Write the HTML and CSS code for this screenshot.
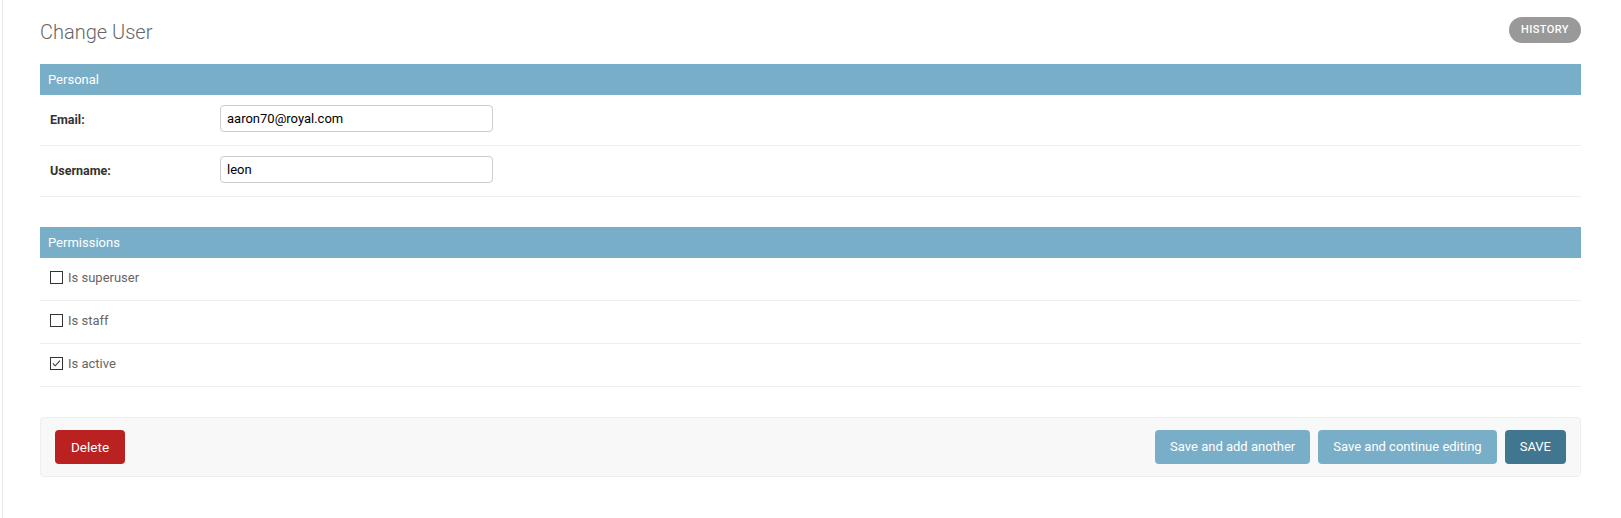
FILE: index.html
```html
<!DOCTYPE html>
<html>
<head>
<meta charset="utf-8">
<title>Change User</title>
<link rel="stylesheet" href="styles.css">
</head>
<body>
<div class="page">
  <div class="page-head">
    <h1 class="title">Change User</h1>
    <a class="history" href="#">History</a>
  </div>

  <fieldset class="module">
    <h2 class="module-title">Personal</h2>
    <div class="form-row">
      <label class="field-label">Email:</label>
      <input class="text-input" type="text" value="aaron70@royal.com">
    </div>
    <div class="form-row">
      <label class="field-label">Username:</label>
      <input class="text-input" type="text" value="leon">
    </div>
  </fieldset>

  <fieldset class="module">
    <h2 class="module-title">Permissions</h2>
    <div class="check-row">
      <span class="checkbox"></span>
      <span class="check-label">Is superuser</span>
    </div>
    <div class="check-row">
      <span class="checkbox"></span>
      <span class="check-label">Is staff</span>
    </div>
    <div class="check-row">
      <span class="checkbox checked"><svg viewBox="0 0 13 13" width="11" height="11"><path d="M2.2 6.4 L5 9.3 L10.6 3.2" fill="none" stroke="#333" stroke-width="1.2"/></svg></span>
      <span class="check-label">Is active</span>
    </div>
  </fieldset>

  <div class="submit-row">
    <a class="btn btn-delete" href="#">Delete</a>
    <div class="submit-actions">
      <button class="btn btn-secondary">Save and add another</button>
      <button class="btn btn-secondary">Save and continue editing</button>
      <button class="btn btn-primary">SAVE</button>
    </div>
  </div>
</div>
</body>
</html>
```

FILE: styles.css
```css
* { box-sizing: border-box; }
html, body {
  margin: 0;
  padding: 0;
  background: #fff;
  font-family: Roboto, "Liberation Sans", Arial, sans-serif;
  color: #333;
}
body { min-height: 518px; }
.page {
  margin-left: 2px;
  border-left: 1px solid #e6e6e6;
  min-height: 518px;
  padding: 17px 40px 20px 37px;
}
.page-head {
  display: flex;
  justify-content: space-between;
  align-items: center;
  height: 26px;
  margin-bottom: 21px;
}
.title {
  margin: 0;
  font-size: 20px;
  font-weight: 300;
  color: #666;
  line-height: 26px;
  position: relative;
  top: 2px;
}
.history {
  display: block;
  height: 26px;
  line-height: 26px;
  padding: 0 12px;
  background: #999;
  color: #fff;
  font-size: 11px;
  font-weight: 500;
  letter-spacing: 0.4px;
  text-transform: uppercase;
  text-decoration: none;
  border-radius: 15px;
}
.module {
  margin: 0 0 30px;
  padding: 0;
  border: none;
  min-width: 0;
}
.module-title {
  margin: 0;
  padding: 8px;
  height: 31px;
  font-size: 13px;
  line-height: 15px;
  font-weight: 400;
  background: #79aec8;
  color: #fff;
}
.form-row {
  display: flex;
  align-items: center;
  padding: 10px 10px 13px;
  border-bottom: 1px solid #eee;
  height: 51px;
}
.field-label {
  width: 170px;
  flex: none;
  font-size: 12.5px;
  font-weight: 700;
  color: #333;
  position: relative;
  top: 1px;
}
.text-input {
  width: 273px;
  height: 27px;
  border: 1px solid #ccc;
  border-radius: 4px;
  padding: 5px 6px;
  font-family: Roboto, "Liberation Sans", Arial, sans-serif;
  font-size: 13px;
  color: #000;
  margin: 0;
}
.check-row {
  display: flex;
  align-items: center;
  height: 43px;
  padding: 0 10px;
  border-bottom: 1px solid #eee;
}
.checkbox {
  width: 13px;
  height: 13px;
  border: 1px solid #333;
  display: flex;
  align-items: center;
  justify-content: center;
  flex: none;
  margin-right: 5px;
  position: relative;
  top: -2px;
}
.check-label {
  font-size: 13px;
  color: #666;
  position: relative;
  top: -2px;
}
.submit-row {
  display: flex;
  justify-content: space-between;
  align-items: center;
  padding: 12px 14px;
  background: #f8f8f8;
  border: 1px solid #eee;
  border-radius: 4px;
}
.submit-actions {
  display: flex;
  gap: 8px;
}
.btn {
  display: block;
  height: 34px;
  line-height: 34px;
  padding: 0 15px;
  border: none;
  border-radius: 4px;
  color: #fff;
  font-family: Roboto, "Liberation Sans", Arial, sans-serif;
  font-size: 13px;
  font-weight: 400;
  text-decoration: none;
  cursor: pointer;
}
.btn-delete { background: #ba2121; padding: 0 16px; font-size: 13.5px; }
.btn-secondary { background: #79aec8; }
.btn-primary { background: #417690; }
```
